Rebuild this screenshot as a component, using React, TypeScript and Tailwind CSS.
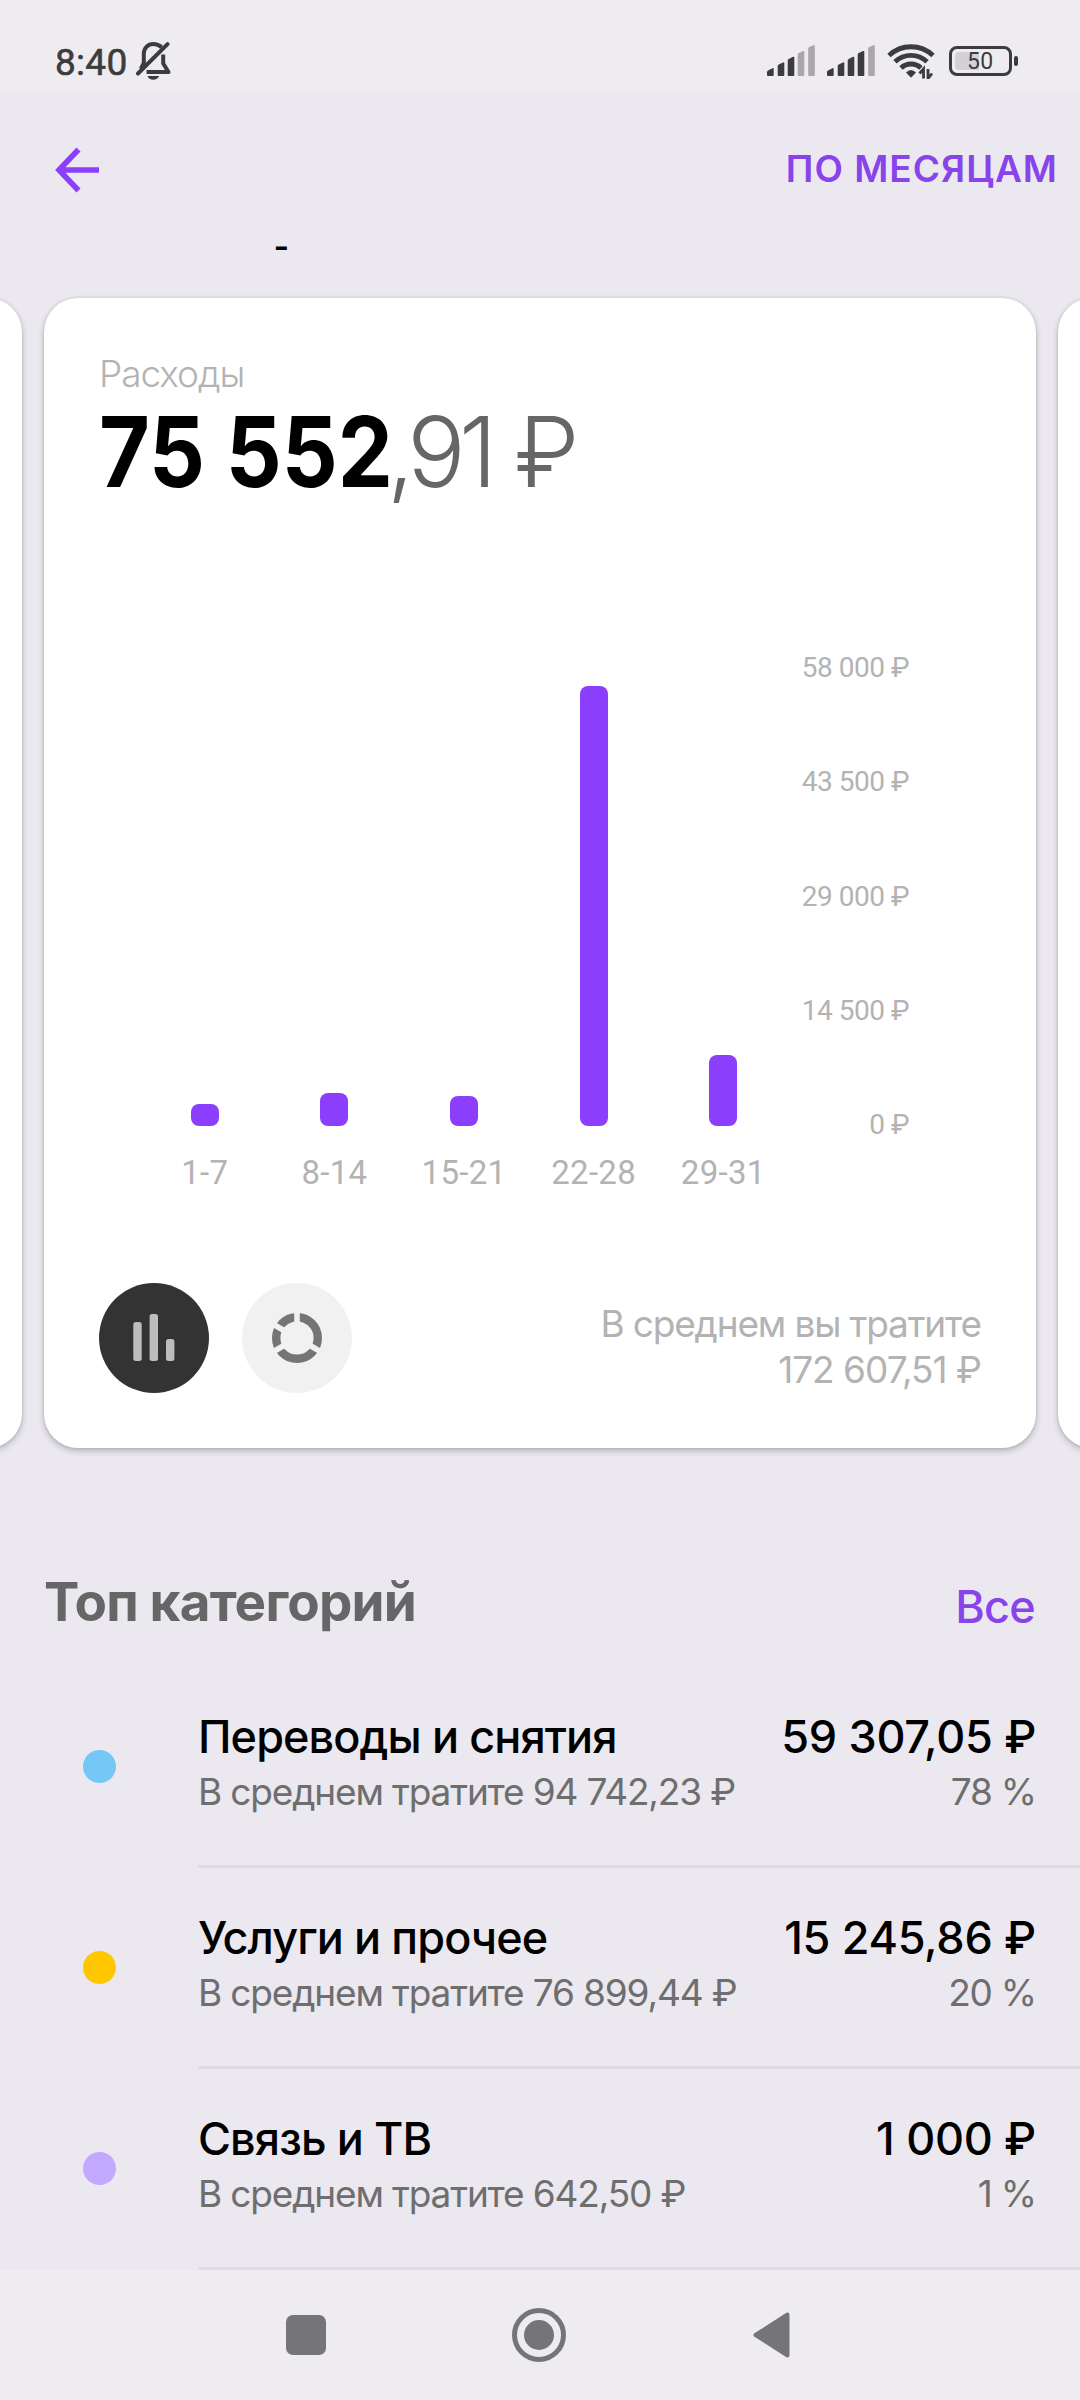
import type { ReactNode } from "react";

const bars = [
  { label: "1-7", height: 22 },
  { label: "8-14", height: 33 },
  { label: "15-21", height: 30 },
  { label: "22-28", height: 440 },
  { label: "29-31", height: 71 },
];

const axis = ["58 000 ₽", "43 500 ₽", "29 000 ₽", "14 500 ₽", "0 ₽"];

const categories = [
  {
    name: "Переводы и снятия",
    average: "В среднем тратите 94 742,23 ₽",
    amount: "59 307,05 ₽",
    share: "78 %",
    dot: "bg-[#75c7f6]",
  },
  {
    name: "Услуги и прочее",
    average: "В среднем тратите 76 899,44 ₽",
    amount: "15 245,86 ₽",
    share: "20 %",
    dot: "bg-[#ffc700]",
  },
  {
    name: "Связь и ТВ",
    average: "В среднем тратите 642,50 ₽",
    amount: "1 000 ₽",
    share: "1 %",
    dot: "bg-[#c3a8ff]",
  },
];

function Signal({ level }: { level: number }) {
  return (
    <svg width="48" height="31" viewBox="0 0 48 31">
      {[
        "M0 30V27Q0 26 1 25.500L5.400 23.300Q6.700 22.600 6.700 24V30Q6.700 31 5.700 31H1Q0 31 0 30Z",
        "M10.700 30V21Q10.700 20 11.700 19.500L16 17.400Q17.300 17 17.300 18V30Q17.300 31 16.300 31H11.700Q10.700 31 10.700 30Z",
        "M20.700 30V15.500Q20.700 14.500 21.700 14L26 11.800Q27.300 11.400 27.300 12.600V30Q27.300 31 26.300 31H21.700Q20.700 31 20.700 30Z",
        "M30.700 30V9.500Q30.700 8.500 31.700 8L36 6Q37.300 5.600 37.300 6.800V30Q37.300 31 36.300 31H31.700Q30.700 31 30.700 30Z",
        "M41.200 30V3.800Q41.200 2.600 42.200 2L46.500 .2Q47.800 -.1 47.800 1V30Q47.800 31 46.800 31H42.200Q41.200 31 41.200 30Z",
      ].map((d, i) => (
        <path key={d} d={d} fill={i < level ? "#3c3c3c" : "#a9a7ac"} />
      ))}
    </svg>
  );
}

function StatusBar() {
  return (
    <div className="flex h-[93px] items-center bg-[#eeecf1] pt-7 pl-[55px] pr-[62px] text-[#3c3c3c]">
      <span className="pt-1 font-[Roboto] text-[37px] leading-10 tracking-[0.3px] [-webkit-text-stroke:0.6px_#3c3c3c]">
        8:40
      </span>
      <svg className="ml-[8px]" width="36" height="38" viewBox="0 0 36 38" fill="none" stroke="#3c3c3c" strokeWidth="4">
        <path d="M31.500 2.200 2 31.500" strokeLinecap="round" />
        <path d="M25.600 5.200C23.200 3 20.400 2 17.400 2 11.600 2 7.800 6.200 7.800 12V21L4.800 27" />
        <path d="M27.200 12.500V21.500L32.500 30H10.500" strokeLinejoin="round" />
        <path d="M11.500 34H23c-.9 2.500-3 3.800-5.800 3.800S12.400 36.500 11.500 34Z" fill="#3c3c3c" stroke="none" />
      </svg>
      <div className="ml-auto flex items-center">
        <Signal level={3} />
        <div className="ml-3">
          <Signal level={4} />
        </div>
        <svg className="ml-[12px]" width="48" height="36" viewBox="0 0 48 36" fill="none" stroke="#3c3c3c" strokeWidth="4.800">
          <path d="M2 12.500A32 32 0 0 1 46 12.500" />
          <path d="M8 18.800A23 23 0 0 1 40 18.800" />
          <path d="M14 25A14.500 14.500 0 0 1 34 25" />
          <path d="M19 29.500Q24 24.500 29 29.500L24 34.800Z" fill="#3c3c3c" stroke="none" />
          <path d="M36.500 35.500V26L32.500 30.500M41 26V35.500L45 30.500" strokeWidth="2.800" />
        </svg>
        <div className="ml-[14px] flex h-[30px] w-[63px] items-center rounded-[8px] border-[3px] border-[#3c3c3c] p-[3px]">
          <div className="flex h-[18px] w-6 items-center rounded-l-[4px] bg-[#d3d1d7] pt-px pl-[12px] font-[Roboto] text-[23px] leading-none tracking-[0.2px]">
            50
          </div>
        </div>
        <div className="ml-[2px] h-[10px] w-1 rounded-[2px] bg-[#3c3c3c]" />
      </div>
    </div>
  );
}

function ModeButton({ className, children }: { className: string; children: ReactNode }) {
  return (
    <button className={`flex size-[110px] items-center justify-center rounded-full ${className}`}>
      {children}
    </button>
  );
}

function Chart() {
  return (
    <div className="mt-[144px] ml-[41px] flex items-start font-[Roboto]">
      <div className="w-[648px]">
        <div className="grid h-[475px] grid-cols-5 items-end justify-items-center">
          {bars.map((bar) => (
            <div
              key={bar.label}
              className="w-7 rounded-[8px] bg-[#8b3ffd]"
              style={{ height: bar.height }}
            />
          ))}
        </div>
        <div className="mt-[27px] grid grid-cols-5 text-center text-[33px] leading-10 tracking-[0.3px]">
          {bars.map((bar) => (
            <span key={bar.label}>{bar.label}</span>
          ))}
        </div>
      </div>
      <div className="mt-px flex h-[489px] w-[121px] flex-col justify-between text-right text-[28px] leading-8 tracking-[-0.5px]">
        {axis.map((value) => (
          <span key={value}>{value}</span>
        ))}
      </div>
    </div>
  );
}

const cardClass =
  "h-[1150px] w-[992px] shrink-0 rounded-[34px] bg-white shadow-[0_3px_6px_rgba(40,35,50,0.26),0_0_3px_rgba(40,35,50,0.14)]";

function ExpensesCard() {
  return (
    <div className={`${cardClass} flex flex-col p-[55px] text-[#b3b3b3]`}>
      <div className="pt-px text-[37px] leading-10 font-[350] tracking-[-1.05px]">Расходы</div>
      <div className="mt-[3px] flex text-[97px] leading-[110px] whitespace-pre">
        <span className="w-[288px] origin-left scale-x-[0.903] font-bold text-black">75 552</span>
        <span className="font-[270] tracking-[-6.5px] text-[#666] [word-spacing:3px]">,91 ₽</span>
      </div>
      <Chart />
      <div className="mt-auto flex items-end">
        <ModeButton className="bg-[#333]">
          <svg width="42" height="48" viewBox="0 0 42 48" fill="#bdbdbd">
            <rect x="0.300" y="8" width="8.400" height="39" rx="2.500" />
            <rect x="16.600" y="0" width="8.400" height="47" rx="2.500" />
            <rect x="33" y="25" width="8.400" height="22" rx="2.500" />
          </svg>
        </ModeButton>
        <ModeButton className="ml-[33px] bg-[#f1f1f1]">
          <svg width="50" height="50" viewBox="-25 -25 50 50">
            <circle r="20.800" fill="none" stroke="#757575" strokeWidth="8.400" />
            <g stroke="#f1f1f1" strokeWidth="5.600">
              <path d="M0 -12V-27" />
              <path d="M0 -12V-27" transform="rotate(120)" />
              <path d="M0 -12V-27" transform="rotate(240)" />
              <path d="M0 -12V-27" transform="rotate(300)" />
            </g>
          </svg>
        </ModeButton>
        <div className="ml-auto text-right text-[37px] leading-[46px] tracking-[-1.15px]">
          <div>В среднем вы тратите</div>
          <div className="tracking-[-1px]">172 607,51 ₽</div>
        </div>
      </div>
    </div>
  );
}

export default function App() {
  return (
    <div className="flex h-[2400px] w-[1080px] flex-col overflow-hidden bg-[#ebe8ef] font-[Inter,'Noto_Sans',sans-serif]">
      <StatusBar />

      <div className="flex h-[133px] items-center justify-between pt-[21px] pr-[22px] pl-[55px]">
        <svg width="44" height="46" viewBox="0 0 44 46" fill="none" stroke="#8b3ffd" strokeWidth="5.600">
          <path d="M44 23H4M23.500 2.500 4 23 23.500 43.500" />
        </svg>
        <span className="pb-[3px] text-[37px] leading-none font-semibold tracking-[1px] text-[#8843ea]">
          ПО МЕСЯЦАМ
        </span>
      </div>

      <div className="h-[72px] pl-[275px] font-[Roboto] text-[46px] leading-10 text-black">-</div>

      <div className="flex justify-center gap-[22px]">
        <div className={cardClass} />
        <ExpensesCard />
        <div className={cardClass} />
      </div>

      <div className="mt-[121px] flex h-[66px] items-center justify-between pr-[45px] pl-[44px]">
        <h2 className="text-[53px] leading-none font-[650] tracking-[-0.8px] text-[#666]">
          Топ категорий
        </h2>
        <span className="pt-2 text-[45px] leading-none font-medium tracking-[-0.7px] text-[#8843ea]">
          Все
        </span>
      </div>

      <div className="mt-[32px]">
        {categories.map((category) => (
          <div key={category.name} className="flex h-[201px]">
            <div className="flex w-[198px] items-center justify-center pb-[3px]">
              <div className={`size-[33px] rounded-full ${category.dot}`} />
            </div>
            <div className="flex flex-1 items-center justify-between border-b-[3px] border-[#dedce2] pr-11 pb-[2px]">
              <div>
                <div className="text-[45px] leading-[54px] font-medium tracking-[-0.9px]">{category.name}</div>
                <div className="text-[37px] leading-[56px] tracking-[-1.15px] text-[#6e6e6e]">
                  {category.average}
                </div>
              </div>
              <div className="text-right">
                <div className="text-[45px] leading-[54px] font-medium tracking-[-0.3px]">{category.amount}</div>
                <div className="text-[37px] leading-[56px] tracking-[-1.2px] text-[#6e6e6e]">
                  {category.share}
                </div>
              </div>
            </div>
          </div>
        ))}
      </div>

      <div className="flex h-[130px] items-center bg-[#eeecf1] pl-[286px]">
        <div className="size-10 rounded-[7px] bg-[#757577]" />
        <div className="ml-[186px] flex size-[54px] items-center justify-center rounded-full border-[5px] border-[#757577]">
          <div className="size-[30px] rounded-full bg-[#757577]" />
        </div>
        <svg className="ml-[187px]" width="37" height="46" viewBox="0 0 37 46" fill="#757577" stroke="#757577" strokeWidth="4" strokeLinejoin="round">
          <path d="M2.500 23 34.500 2.500V43.500Z" />
        </svg>
      </div>
    </div>
  );
}
